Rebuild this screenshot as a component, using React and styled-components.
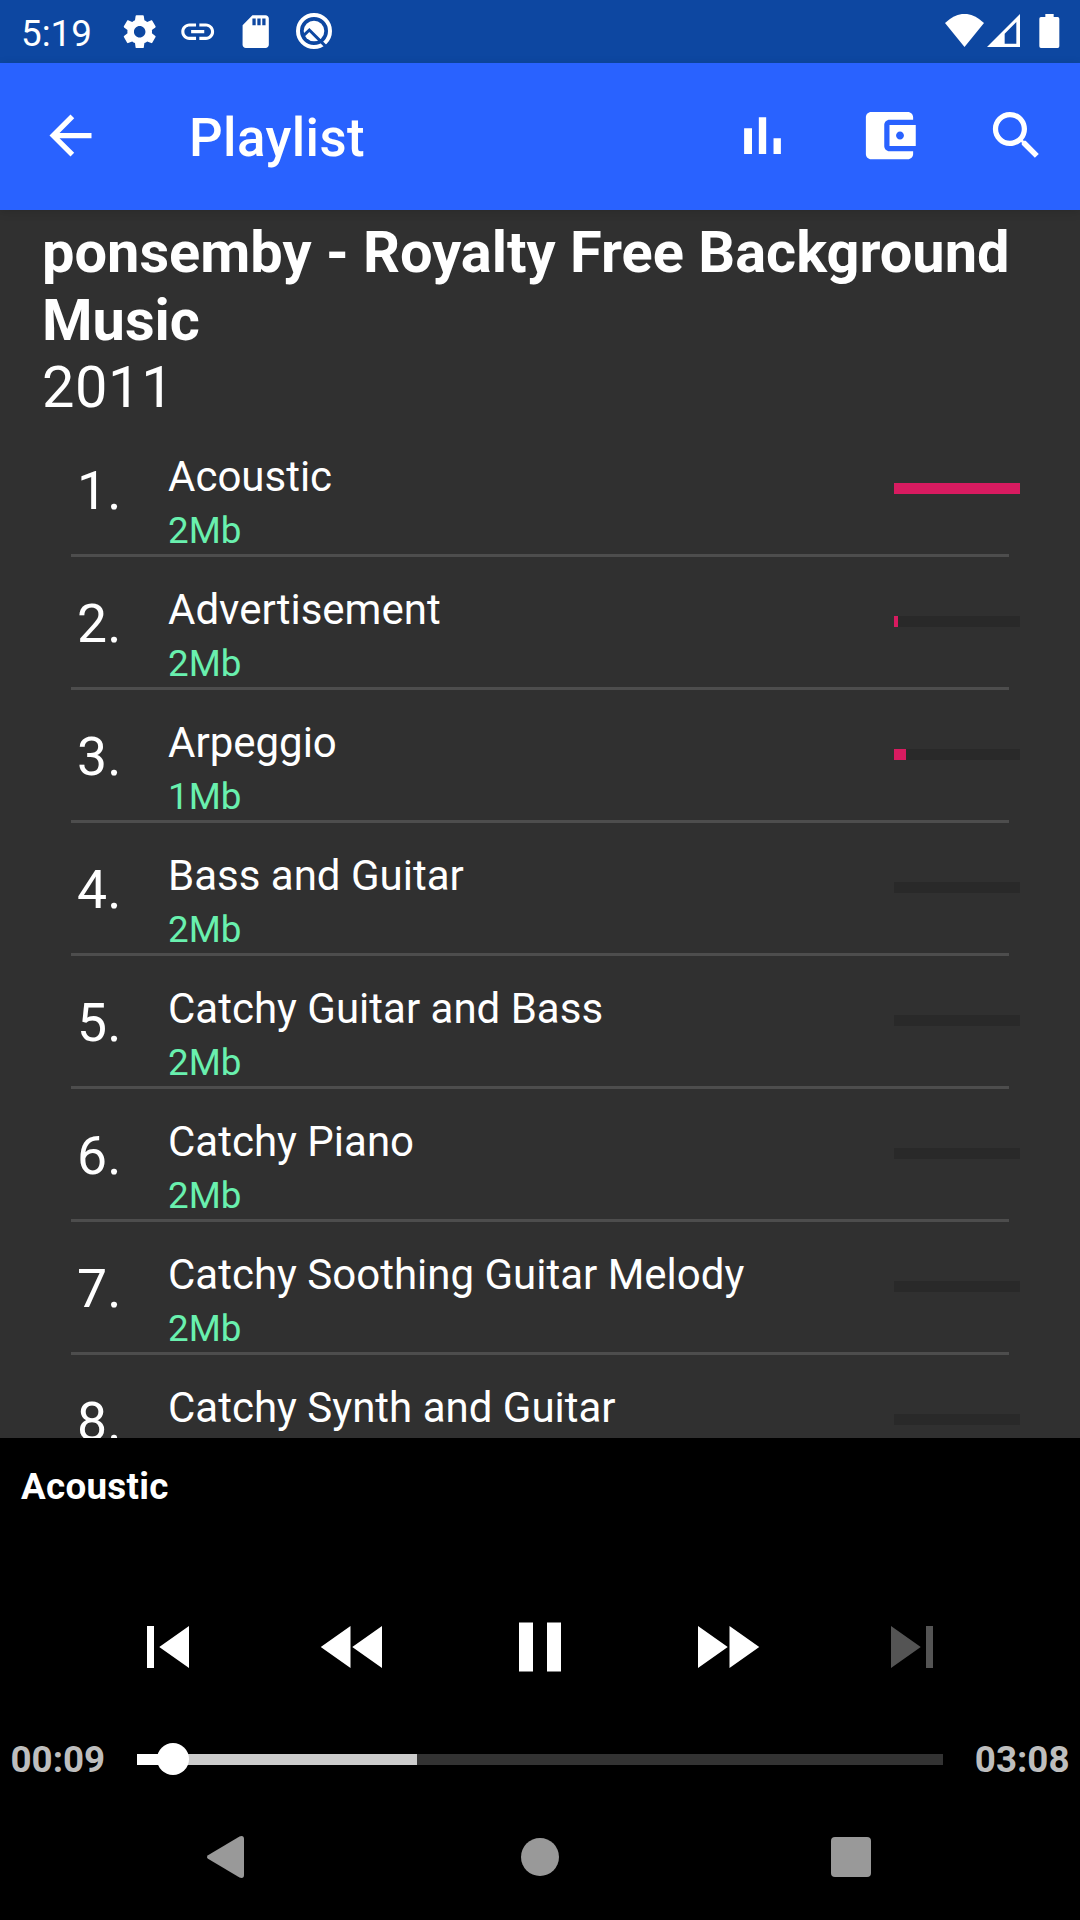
import React from "react";
import styled, { createGlobalStyle } from "styled-components";

const GlobalStyle = createGlobalStyle`
  *, *::before, *::after { box-sizing: border-box; }
  body { margin: 0; background: #000; }
`;

const Screen = styled.div`
  display: flex;
  flex-direction: column;
  width: 1080px;
  height: 1920px;
  overflow: hidden;
  background: #303030;
  color: #fff;
  font-family: Roboto, "Noto Sans", sans-serif;
  font-weight: 400;
`;

const Icon = styled.svg`
  display: block;
  flex: none;
  width: ${(p) => p.$size}px;
  height: ${(p) => p.$h || p.$size}px;
  margin-left: ${(p) => p.$gap || 0}px;
  fill: ${(p) => p.$color || "#fff"};
`;

/* ---------- status bar ---------- */

const StatusBar = styled.header`
  display: flex;
  flex: none;
  justify-content: space-between;
  height: 63px;
  padding: 0 20px 0 21px;
  background: #0d47a1;
`;

const StatusGroup = styled.div`
  display: flex;
  align-items: center;
  height: 63px;
`;

const Clock = styled.span`
  width: 99px;
  padding-top: 4px;
  font-size: 36.75px;
  line-height: 43px;
`;

const Notifications = styled.div`
  display: grid;
  grid-template-columns: repeat(4, 40px);
  column-gap: 18px;
  justify-items: center;
  align-items: center;
`;

const SystemIcons = styled.div`
  display: flex;
  align-items: center;
  margin-top: -1px;
`;

/* ---------- app bar ---------- */

const AppBar = styled.div`
  display: flex;
  flex: none;
  align-items: center;
  position: relative;
  z-index: 1;
  height: 147px;
  padding: 0 32px 0 39px;
  background: #2962ff;
  box-shadow: 0 2px 9px rgba(0, 0, 0, 0.14);
`;

const BarButton = styled.button`
  display: flex;
  padding: 0;
  margin: -2px 0 0;
  border: 0;
  background: none;
`;

const AppTitle = styled.h1`
  flex: 1;
  margin: 3px 0 0 87px;
  font-size: 52.8px;
  font-weight: 500;
  letter-spacing: 0.4px;
  line-height: 62px;
`;

const Actions = styled.div`
  display: flex;
  gap: 64px;
`;

/* ---------- album and tracks ---------- */

const Content = styled.main`
  flex: none;
  height: 1228px;
  overflow: hidden;
`;

const Album = styled.section`
  height: 214px;
  padding: 9px 42px 0;
  font-size: 57.75px;
  line-height: 67.67px;
`;

const AlbumTitle = styled.h2`
  margin: 0;
  font-size: inherit;
  font-weight: 700;
`;

const AlbumYear = styled.div`
  letter-spacing: 0.6px;
`;

const TrackList = styled.div`
  display: flex;
  flex-direction: column;
`;

const Track = styled.div`
  display: grid;
  grid-template-columns: 91px 1fr 126px;
  height: 130px;
  padding: 0 60px 0 77px;
`;

const TrackNumber = styled.div`
  padding-top: 35px;
  font-size: 53.5px;
  letter-spacing: 0.2px;
  line-height: 63px;
`;

const TrackText = styled.div`
  padding-top: 28px;
  white-space: nowrap;
`;

const TrackTitle = styled.div`
  height: 57px;
  font-size: 42px;
  line-height: 49px;
`;

const TrackSize = styled.div`
  color: #69f0ae;
  font-size: 36.75px;
  line-height: 43px;
`;

const Download = styled.div`
  width: 126px;
  height: 11px;
  margin-top: 59px;
  background: #292929;
`;

const DownloadFill = styled.div`
  height: 100%;
  background: #d81b60;
`;

const Divider = styled.div`
  height: 3px;
  margin: 0 71px;
  background: #4d4d4d;
`;

/* ---------- player ---------- */

const Player = styled.section`
  display: flex;
  flex: none;
  flex-direction: column;
  height: 356px;
  background: #000;
`;

const NowPlaying = styled.div`
  height: 167px;
  padding: 27px 21px 0;
  font-size: 36.75px;
  font-weight: 700;
  letter-spacing: 0.3px;
  line-height: 43px;
`;

const Controls = styled.div`
  display: flex;
  justify-content: space-between;
  height: 84px;
  padding: 0 126px;
`;

const ControlButton = styled.button`
  padding: 0;
  border: 0;
  background: none;
`;

const SeekRow = styled.div`
  display: flex;
  align-items: center;
  justify-content: space-between;
  height: 44px;
  margin-top: 48px;
  padding: 0 10.5px;
`;

const Time = styled.span`
  color: #bebebe;
  font-size: 36.75px;
  font-weight: 700;
  line-height: 43px;
`;

const SeekTrack = styled.div`
  position: relative;
  width: 806px;
  height: 11px;
  background: #333;
`;

const SeekFill = styled.div`
  position: absolute;
  inset: 0 auto 0 0;
  background: ${(p) => p.$color};
`;

const SeekThumb = styled.div`
  position: absolute;
  top: 50%;
  width: 32px;
  height: 32px;
  border-radius: 50%;
  background: #fff;
  transform: translate(-50%, -50%);
`;

/* ---------- navigation bar ---------- */

const NavBar = styled.nav`
  display: grid;
  flex: none;
  grid-template-columns: 315px 310px 40px;
  align-items: center;
  height: 126px;
  padding-left: 206px;
  background: #000;
`;

const tracks = [
  ["Acoustic", 2, 100],
  ["Advertisement", 2, 3],
  ["Arpeggio", 1, 9.5],
  ["Bass and Guitar", 2, 0],
  ["Catchy Guitar and Bass", 2, 0],
  ["Catchy Piano", 2, 0],
  ["Catchy Soothing Guitar Melody", 2, 0],
  ["Catchy Synth and Guitar", 2, 0],
];

const controls = [
  { name: "Previous", d: "M6 6h2v12H6zm3.5 6l8.5 6V6z" },
  { name: "Rewind", d: "M11 18V6l-8.5 6 8.5 6zm.5-6l8.5 6V6l-8.5 6z" },
  { name: "Pause", d: "M6 19h4V5H6v14zm8-14v14h4V5h-4z" },
  { name: "Forward", d: "M4 18l8.5-6L4 6v12zm9-12v12l8.5-6L13 6z" },
  { name: "Next", d: "M6 18l8.5-6L6 6v12zM16 6v12h2V6h-2z", color: "#545454" },
];

const playback = { played: 36, buffered: 280 };

const actions = [
  { name: "Statistics", d: "M5 9.2h3V19H5V9.2zM10.6 5h2.8v14h-2.8V5zm5.6 8H19v6h-2.8v-6z" },
  {
    name: "Wallet",
    d: "M21 18v1c0 1.1-.9 2-2 2H5c-1.11 0-2-.9-2-2V5c0-1.1.89-2 2-2h14c1.1 0 2 .9 2 2v1h-9c-1.11 0-2 .9-2 2v8c0 1.1.89 2 2 2h9zm-9-2h10V8H12v8zm4-2.5c-.83 0-1.5-.67-1.5-1.5s.67-1.5 1.5-1.5 1.5.67 1.5 1.5-.67 1.5-1.5 1.5z",
  },
  {
    name: "Search",
    d: "M15.5 14h-.79l-.28-.27C15.41 12.59 16 11.11 16 9.5 16 5.91 13.09 3 9.5 3S3 5.91 3 9.5 5.91 16 9.5 16c1.61 0 3.09-.59 4.23-1.57l.27.28v.79l5 4.99L20.49 19l-4.99-5zm-6 0C7.01 14 5 11.99 5 9.5S7.01 5 9.5 5 14 7.01 14 9.5 11.99 14 9.5 14z",
  },
];

function NotificationIcons() {
  return (
    <Notifications>
      <Icon viewBox="0 0 24 24" $size={39.4}>
        <path d="M19.43 12.98c.04-.32.07-.64.07-.98s-.03-.66-.07-.98l2.11-1.65c.19-.15.24-.42.12-.64l-2-3.46c-.12-.22-.39-.3-.61-.22l-2.49 1c-.52-.4-1.08-.73-1.69-.98l-.38-2.65C14.46 2.18 14.25 2 14 2h-4c-.25 0-.46.18-.49.42l-.38 2.65c-.61.25-1.17.59-1.69.98l-2.49-1c-.23-.09-.49 0-.61.22l-2 3.46c-.13.22-.07.49.12.64l2.11 1.65c-.04.32-.07.65-.07.98s.03.66.07.98l-2.11 1.65c-.19.15-.24.42-.12.64l2 3.46c.12.22.39.3.61.22l2.49-1c.52.4 1.08.73 1.69.98l.38 2.65c.03.24.24.42.49.42h4c.25 0 .46-.18.49-.42l.38-2.65c.61-.25 1.17-.59 1.69-.98l2.49 1c.23.09.49 0 .61-.22l2-3.46c.12-.22.07-.49-.12-.64l-2.11-1.65zM12 15.5c-1.93 0-3.5-1.57-3.5-3.5s1.57-3.5 3.5-3.5 3.5 1.57 3.5 3.5-1.57 3.5-3.5 3.5z" />
      </Icon>
      <Icon viewBox="0 0 24 24" $size={39.4}>
        <path d="M3.9 12c0-1.71 1.39-3.1 3.1-3.1h4V7H7c-2.76 0-5 2.24-5 5s2.24 5 5 5h4v-1.9H7c-1.71 0-3.1-1.39-3.1-3.1zM8 13h8v-2H8v2zm9-6h-4v1.9h4c1.71 0 3.1 1.39 3.1 3.1s-1.39 3.1-3.1 3.1h-4V17h4c2.76 0 5-2.24 5-5s-2.24-5-5-5z" />
      </Icon>
      <Icon viewBox="0 0 24 24" $size={39.4}>
        <path d="M18 2h-8L4.02 8 4 20c0 1.1.9 2 2 2h12c1.1 0 2-.9 2-2V4c0-1.1-.9-2-2-2zm-6 6h-2V4h2v4zm3 0h-2V4h2v4zm3 0h-2V4h2v4z" />
      </Icon>
      <Icon viewBox="0 0 108 108" $size={36}>
        <circle cx="54" cy="54" r="48" fill="none" stroke="#fff" strokeWidth="12" />
        <circle cx="54" cy="54" r="31" />
        <path d="M20 70L40 51L90 101" fill="none" stroke="#0d47a1" strokeWidth="9" />
      </Icon>
    </Notifications>
  );
}

function App() {
  return (
    <>
      <GlobalStyle />
      <Screen>
        <StatusBar>
          <StatusGroup>
            <Clock>5:19</Clock>
            <NotificationIcons />
          </StatusGroup>
          <StatusGroup>
            <SystemIcons>
              <Icon viewBox="0 0 117 102" $size={39} $h={34}>
                <path d="M0 27Q58.500 -28 117 27L58.500 99Z" />
              </Icon>
              <Icon viewBox="0 0 99 102" $size={33} $h={34} $gap={3}>
                <path fillRule="evenodd" d="M0 99L99 0V99ZM53 59V89H88V24Z" />
              </Icon>
              <Icon viewBox="0 0 63 102" $size={21} $h={34} $gap={19}>
                <path d="M19 0H44V9H56Q61 9 61 14V97Q61 102 56 102H6Q1 102 1 97V14Q1 9 6 9H19Z" />
              </Icon>
            </SystemIcons>
          </StatusGroup>
        </StatusBar>

        <AppBar>
          <BarButton aria-label="Back">
            <Icon viewBox="0 0 24 24" $size={63}>
              <path d="M20 11H7.83l5.59-5.59L12 4l-8 8 8 8 1.41-1.41L7.83 13H20v-2z" />
            </Icon>
          </BarButton>
          <AppTitle>Playlist</AppTitle>
          <Actions>
            {actions.map((a) => (
              <BarButton key={a.name} aria-label={a.name}>
                <Icon viewBox="0 0 24 24" $size={63}>
                  <path d={a.d} />
                </Icon>
              </BarButton>
            ))}
          </Actions>
        </AppBar>

        <Content>
          <Album>
            <AlbumTitle>ponsemby - Royalty Free Background Music</AlbumTitle>
            <AlbumYear>2011</AlbumYear>
          </Album>
          <TrackList>
            {tracks.map(([title, size, progress], i) => (
              <React.Fragment key={title}>
                <Track>
                  <TrackNumber>{i + 1}.</TrackNumber>
                  <TrackText>
                    <TrackTitle>{title}</TrackTitle>
                    <TrackSize>{size}Mb</TrackSize>
                  </TrackText>
                  <Download>
                    <DownloadFill style={{ width: `${progress}%` }} />
                  </Download>
                </Track>
                <Divider />
              </React.Fragment>
            ))}
          </TrackList>
        </Content>

        <Player>
          <NowPlaying>Acoustic</NowPlaying>
          <Controls>
            {controls.map((c) => (
              <ControlButton key={c.name} aria-label={c.name}>
                <Icon viewBox="0 0 24 24" $size={84} $color={c.color}>
                  <path d={c.d} />
                </Icon>
              </ControlButton>
            ))}
          </Controls>
          <SeekRow>
            <Time>00:09</Time>
            <SeekTrack>
              <SeekFill $color="#ccc" style={{ width: playback.buffered }} />
              <SeekFill $color="#fff" style={{ width: playback.played }} />
              <SeekThumb style={{ left: playback.played }} />
            </SeekTrack>
            <Time>03:08</Time>
          </SeekRow>
        </Player>

        <NavBar>
          <Icon viewBox="0 0 38 42" $size={38} $h={42} $color="#999">
            <path d="M2 19.200L33.500 .4Q38 -1 38 3V39Q38 43 33.500 41.600L2 22.800Q0 21 2 19.200Z" />
          </Icon>
          <Icon viewBox="0 0 38 38" $size={38} $color="#999">
            <circle cx="19" cy="19" r="19" />
          </Icon>
          <Icon viewBox="0 0 40 40" $size={40} $color="#999">
            <rect width="40" height="40" rx="4" />
          </Icon>
        </NavBar>
      </Screen>
    </>
  );
}

export default App;
